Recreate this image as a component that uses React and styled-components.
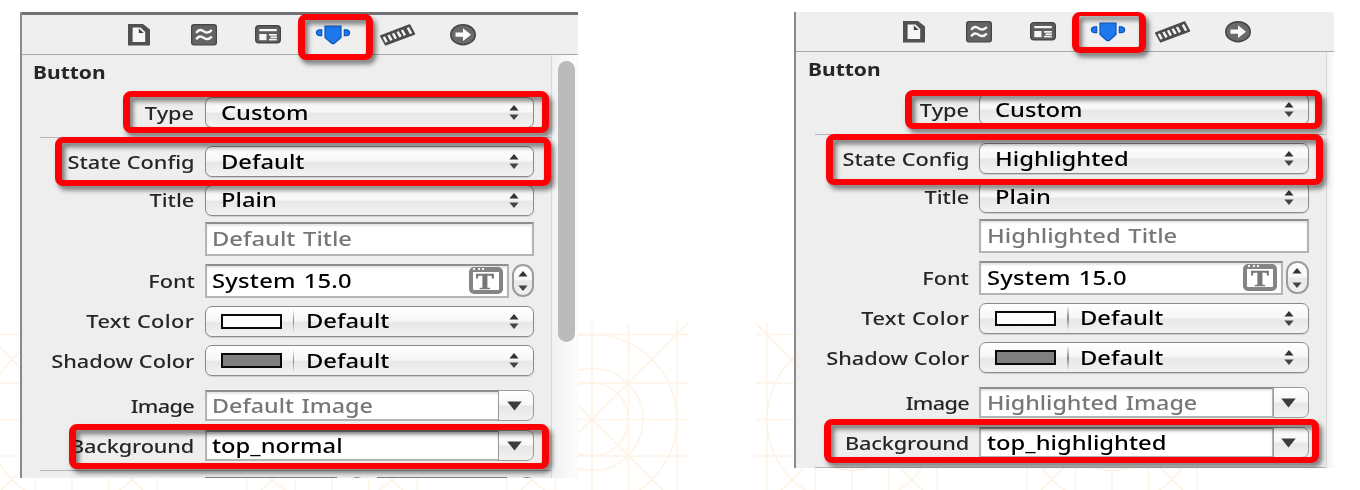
import React from 'react';
import styled, { createGlobalStyle, css } from 'styled-components';

const Global = createGlobalStyle`
  * { box-sizing: border-box; }
  body { margin: 0; background: #fff; overflow: hidden; }
`;

const Page = styled.main`
  position: relative;
  display: flex;
  align-items: flex-start;
  gap: 216px;
  width: 1360px;
  height: 490px;
  padding: 12px 0 0 20px;
  overflow: hidden;
  background: #fff;
  font-family: 'Noto Sans', 'Open Sans', sans-serif;
`;

const Backdrop = styled.svg`
  position: absolute;
  inset: 0;
  fill: none;
  stroke: #fef3e6;
  stroke-width: 1.6;
`;

const Panel = styled.section`
  position: relative;
  flex: none;
  width: ${(p) => p.$w}px;
  height: ${(p) => p.$h}px;
  overflow: hidden;
  background: #eeeeee;
  border-left: 2px solid #8a8a8a;
`;

const Toolbar = styled.header`
  display: flex;
  align-items: center;
  height: ${(p) => (p.$ruled ? 43 : 40)}px;
  padding-left: 85.4px;
  border-bottom: 1.5px solid #a9a9a9;
  background: #efefef;
  ${(p) =>
    p.$ruled &&
    css`
      margin-left: -2px;
      padding-left: 86.4px;
      border-top: 3px solid #727272;
    `}
`;

const Tool = styled.div`
  display: flex;
  flex: none;
  justify-content: center;
  width: 64.8px;
  svg { display: block; overflow: visible; }
`;

const Body = styled.div`
  display: flex;
`;

const Form = styled.div`
  flex: none;
  width: ${(p) => (p.$inset ? 530 : 529)}px;
  padding-left: ${(p) => p.$inset || 0}px;
`;

const Text = styled.span`
  display: inline-block;
  white-space: nowrap;
  line-height: 26px;
  font-size: ${(p) => p.$size || 19.6}px;
  font-weight: ${(p) => p.$weight || 500};
  letter-spacing: ${(p) => p.$track || 0}px;
  word-spacing: ${(p) => p.$words ?? 1.2}px;
  color: ${(p) => p.$color || '#000'};
  transform: scaleX(${(p) => p.$stretch || 1.212});
  transform-origin: ${(p) => p.$from || 'left'} center;
`;

const Heading = styled.h2`
  height: 42px;
  margin: 0;
  padding: 2px 0 0 11px;
  font-weight: inherit;
  line-height: 26px;
`;

const Row = styled.div`
  display: flex;
  align-items: center;
  height: ${(p) => p.$h || 31}px;
  margin-bottom: ${(p) => p.$gap}px;
`;

const Label = styled.div`
  flex: none;
  width: 172.5px;
  margin-right: 10px;
  text-align: right;
`;

const Rule = styled.div`
  width: 511px;
  height: 1.5px;
  margin: 0 0 ${(p) => p.$gap}px 18px;
  background: #b5b5b5;
`;

const gloss = css`
  background: linear-gradient(#ffffff 0%, #f7f7f7 46%, #e7e7e7 54%, #f2f2f2 100%);
`;

const Popup = styled.div`
  display: flex;
  align-items: center;
  width: 329.5px;
  height: 31px;
  padding: 0 14px 0 15px;
  border: 1.5px solid #8b8b8b;
  border-radius: 7px;
  box-shadow: 0 1px 1px rgba(0, 0, 0, 0.14);
  ${gloss}
`;

const Grow = styled.div`
  flex: 1;
`;

const Swatch = styled.div`
  width: 61px;
  height: 15px;
  border: 2px solid #0a0a0a;
  background: ${(p) => p.$fill};
`;

const Notch = styled.div`
  width: 1.5px;
  height: 24px;
  margin: 0 11.5px 0 11px;
  background: linear-gradient(transparent, #888 50%, transparent);
`;

const Field = styled.div`
  display: flex;
  align-items: center;
  justify-content: space-between;
  width: ${(p) => p.$w || 329.5}px;
  height: 100%;
  padding: 0 4px 0 5.5px;
  border: 2px solid #b4b4b4;
  border-top-color: #8e8e8e;
  background: #fff;
  box-shadow: inset 0 2px 2px rgba(0, 0, 0, 0.1);
`;

const DropButton = styled.div`
  display: flex;
  align-items: center;
  justify-content: center;
  width: 36px;
  height: 31px;
  margin-left: -1.5px;
  padding-right: 3.5px;
  border: 1.5px solid #999;
  border-radius: 0 7px 7px 0;
  ${gloss}
`;

const StepperBox = styled.div`
  display: flex;
  align-items: center;
  justify-content: center;
  width: 22.5px;
  height: 33px;
  margin-left: 3px;
  border: 2px solid #9c9c9c;
  border-radius: 11px;
  ${gloss}
`;

const Sliver = styled.div`
  width: ${(p) => p.$w}px;
  height: 28px;
  margin-right: 11px;
  border: 1.5px solid #808080;
  border-radius: ${(p) => (p.$round ? 11 : 0)}px;
  background: #fff;
`;

const ScrollTrack = styled.div`
  flex: 1;
  height: 440px;
  padding: 6px 2px 0 6px;
  border-left: 1.5px solid #d8d8d8;
  background: linear-gradient(90deg, #f1f1f1, #fbfbfb 80%);
`;

const ScrollThumb = styled.div`
  width: 17px;
  height: 281px;
  border-radius: 9px;
  background: #bbbbbb;
`;

const Callout = styled.div`
  position: absolute;
  left: ${(p) => p.$x}px;
  top: ${(p) => p.$y}px;
  width: ${(p) => p.$w}px;
  height: ${(p) => p.$h}px;
  border: 7px solid #fd0006;
  border-top-width: ${(p) => p.$topEdge || 6}px;
  border-bottom-width: 6px;
  border-radius: 8px;
  filter: drop-shadow(3px 4px 2.5px rgba(0, 0, 0, 0.52));
`;

const DocIcon = () => (
  <svg width="22" height="22" viewBox="0 0 22 22">
    <path d="M0 0H15L22 5.5V21.5H0Z" fill="#505050" />
    <path d="M4.600 3.600H12.500L17.200 8V18H4.600Z" fill="#f6f6f6" />
    <path d="M10.800 4.600V9H15.800Z" fill="#404040" />
  </svg>
);

const WaveIcon = () => (
  <svg width="26" height="22" viewBox="0 0 26 22">
    <rect width="26" height="21.5" rx="3" fill="#444" />
    <rect x="1.2" y="1.2" width="23.6" height="19.2" rx="2" fill="#636363" />
    <g fill="none" stroke="#f8f8f8" strokeWidth="2.4">
      <path d="M5.200 8.800C7.500 5.300 10 5.300 13 7.400S18.400 8.800 20.800 6" />
      <path d="M5.200 15.300C7.500 11.800 10 11.800 13 13.900S18.400 15.300 20.800 12.500" />
    </g>
  </svg>
);

const CardIcon = () => (
  <svg width="26" height="19" viewBox="0 0 26 19">
    <rect width="26" height="18.500" rx="4" fill="#444" />
    <rect x="1.200" y="1.200" width="23.600" height="16.100" rx="3" fill="#5e5e5e" />
    <g fill="#f6f6f6">
      <rect x="4.300" y="4" width="17.500" height="2.200" />
      <rect x="4.300" y="9" width="7.200" height="6.200" />
      <rect x="14" y="9" width="7.800" height="1.700" />
      <rect x="15.500" y="11.400" width="6.300" height="1.600" />
      <rect x="14" y="13.700" width="7.800" height="1.700" />
    </g>
  </svg>
);

const ShieldIcon = () => (
  <svg width="36" height="20" viewBox="0 0 36 20">
    <g fill="#1d78ec" stroke="#0a55bd" strokeWidth="1.200">
      <path d="M10 1H26V12.500L19.500 18.200Q18 19.200 16.500 18.200L10 12.500Z" />
      <path d="M6.700 4.800V10.700H5C.2 10.700 .2 4.800 5 4.800Z" />
      <path d="M29.300 4.800V10.700H31C35.800 10.700 35.800 4.800 31 4.800Z" />
    </g>
  </svg>
);

const RulerIcon = () => (
  <svg width="36" height="22" viewBox="0 0 36 22">
    <path d="M.8 12L29.500 1L34.400 10L5.700 20.800Z" fill="#4c4c4c" stroke="#4c4c4c" strokeWidth="1.600" strokeLinejoin="round" />
    <path
      d="M3.800 12.800L6.700 18.200M8.500 11L10.500 14.800M13 9.400L15.900 14.700M17.600 7.600L19.600 11.300M22 6L24.900 11.300M27.800 3.700L31.100 9.600"
      stroke="#f2f2f2"
      strokeWidth="2.500"
    />
    <path d="M10.300 14L11.500 16.300M19.400 10.700L20.600 12.900" stroke="#f2f2f2" strokeWidth="2.500" />
  </svg>
);

const ArrowIcon = () => (
  <svg width="26" height="22" viewBox="0 0 26 22">
    <ellipse cx="13" cy="10.700" rx="12.200" ry="10" fill="#6a6a6a" stroke="#434343" strokeWidth="1.500" />
    <path d="M5.500 8.500H13V4.300L21 10.700L13 17V12.800H5.500Z" fill="#fafafa" />
  </svg>
);

const Arrows = ({ spread = 0 }) => (
  <svg width="10" height={15 + spread * 2} viewBox={`0 ${-spread} 10 ${15 + spread * 2}`}>
    <path d={`M5 ${-spread}L9.600 ${5.600 - spread}H.4Z`} fill="#333" />
    <path d={`M5 ${15 + spread}L9.600 ${9.400 + spread}H.4Z`} fill="#444" />
  </svg>
);

const DownArrow = () => (
  <svg width="15" height="10" viewBox="0 0 15 10">
    <path d="M.2 .5H14.800L7.500 9.500Z" fill="#3c3c3c" />
  </svg>
);

const Glyph = styled.div`
  position: relative;
  display: flex;
  justify-content: center;
  width: 34px;
  height: 27px;
  border: 4px solid #858585;
  border-top-width: 5.500px;
  border-radius: 5px;
  background: #fff;
  font: bold 24px/19px 'Liberation Serif', serif;
  color: #777;
  -webkit-text-stroke: 0.7px #777;
  &::before {
    content: '';
    position: absolute;
    left: 0.500px;
    top: -4px;
    width: 11px;
    height: 2px;
    background: repeating-linear-gradient(90deg, #f4f4f4 0 2px, transparent 2px 4.500px);
  }
  span { transform: scaleX(1.120); }
`;

const LabelText = ({ children, track, words }) => (
  <Label>
    <Text $size={18.6} $stretch={1.17} $color="#262626" $from="right" $track={track} $words={words ?? 0}>
      {children}
    </Text>
  </Label>
);

const PopupRow = ({ label, track, value, swatch, gap }) => (
  <Row $gap={gap}>
    <LabelText track={track}>{label}</LabelText>
    <Popup>
      {swatch && <Swatch $fill={swatch} />}
      {swatch && <Notch />}
      <Text>{value}</Text>
      <Grow />
      <Arrows />
    </Popup>
  </Row>
);

const ComboRow = ({ label, track, value, placeholder, gap }) => (
  <Row $gap={gap}>
    <LabelText track={track}>{label}</LabelText>
    <Field $w={295}>
      <Text $color={placeholder ? '#777' : '#000'} $stretch={placeholder ? 1.19 : 1.212}>{value}</Text>
    </Field>
    <DropButton><DownArrow /></DropButton>
  </Row>
);

const tools = [DocIcon, WaveIcon, CardIcon, ShieldIcon, RulerIcon, ArrowIcon];

function Inspector({ width, height, ruled, inset, state, background, callouts }) {
  return (
    <Panel $w={width} $h={height}>
      <Toolbar $ruled={ruled}>
        {tools.map((Icon, i) => (
          <Tool key={i}><Icon /></Tool>
        ))}
      </Toolbar>
      <Body>
        <Form $inset={inset}>
          <Heading>
            <Text $size={18.6} $weight={700} $color="#262626" $stretch={1.13}>Button</Text>
          </Heading>
          <PopupRow label="Type" value="Custom" gap={8.5} />
          <Rule $gap={8} />
          <PopupRow label="State Config" value={state} gap={7.5} />
          <PopupRow label="Title" value="Plain" gap={6.5} />
          <Row $h={33.5} $gap={8}>
            <LabelText />
            <Field><Text $color="#777">{state} Title</Text></Field>
          </Row>
          <Row $h={34} $gap={8}>
            <LabelText>Font</LabelText>
            <Field $w={304}>
              <Text $track={0.2} $words={1.2}>System 15.0</Text>
              <Glyph><span>T</span></Glyph>
            </Field>
            <StepperBox><Arrows spread={2.5} /></StepperBox>
          </Row>
          <PopupRow label="Text Color" track={0.35} value="Default" swatch="#ffffff" gap={8.5} />
          <PopupRow label="Shadow Color" value="Default" swatch="#808080" gap={14} />
          <ComboRow label="Image" track={-0.6} value={`${state} Image`} placeholder gap={9} />
          <ComboRow label="Background" track={-0.15} value={background} gap={8.5} />
          <Rule $gap={5.5} />
          <Row $h={28} $gap={0}>
            <Label />
            <Sliver $w={132} />
            <Sliver $w={18} $round />
            <Sliver $w={130} />
            <Sliver $w={18} $round />
          </Row>
        </Form>
        <ScrollTrack>{ruled && <ScrollThumb />}</ScrollTrack>
      </Body>
      {callouts.map(([x, y, w, h, topEdge], i) => (
        <Callout key={i} $x={x} $y={y} $w={w} $h={h} $topEdge={topEdge} />
      ))}
    </Panel>
  );
}

const Tile = ({ x }) => (
  <g transform={`translate(${x} 419.500)`}>
    {[-85, -36.5, 0, 36.5, 85].map((d) => (
      <path key={d} d={`M${d} -97V97M-97 ${d}H97`} />
    ))}
    <path d="M-97 -97L97 97M97 -97L-97 97" />
    <circle r="85" />
    <circle r="51" />
    <circle r="36.500" />
  </g>
);

export default function App() {
  return (
    <Page>
      <Global />
      <Backdrop width="1360" height="490">
        {[72, 332, 592, 852, 1112].map((x) => <Tile key={x} x={x} />)}
      </Backdrop>
      <Inspector
        width={558}
        height={466}
        ruled
        state="Default"
        background="top_normal"
        callouts={[
          [276, 2, 74.5, 46],
          [101, 79, 426, 42],
          [33, 125, 495.5, 49],
          [47, 411.5, 480, 45.5],
        ]}
      />
      <Inspector
        width={540}
        height={456}
        inset={0.7}
        state="Highlighted"
        background="top_highlighted"
        callouts={[
          [276, 0, 73.5, 41, 4],
          [108.5, 78, 417, 39],
          [30, 122, 497, 51],
          [28, 406.5, 495, 44.5],
        ]}
      />
    </Page>
  );
}
